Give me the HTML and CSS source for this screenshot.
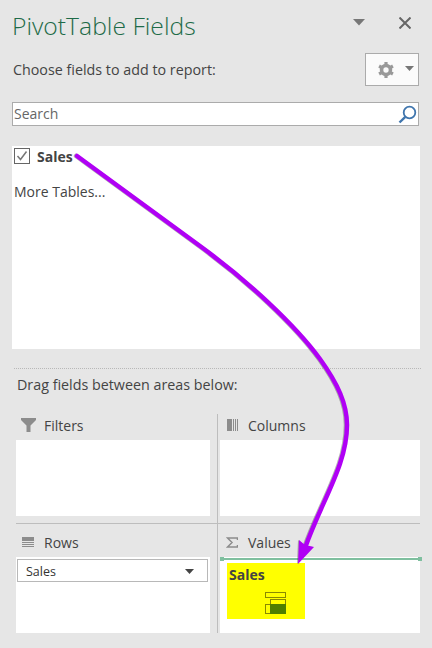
FILE: index.html
```html
<!DOCTYPE html>
<html>
  <head>
    <link rel="stylesheet" href="styles.css">
  </head>
  <body>
    <div class="pane">
      <div class="header">
        <div class="title">PivotTable Fields</div>
        <svg class="drop" width="13" height="7" viewBox="0 0 13 7"><path d="M0 0H12L6 6.500Z" fill="#777"/></svg>
        <svg class="close" width="12" height="12" viewBox="0 0 12 12"><path d="M0.500 0.500L11.500 11.500M11.500 0.500L0.500 11.500" stroke="#666" stroke-width="2" fill="none"/></svg>
      </div>

      <div class="choose">
        <span>Choose fields to add to report:</span>
        <div class="gear">
          <svg width="16" height="16" viewBox="0 0 18 18">
            <circle cx="9" cy="9" r="5" fill="none" stroke="#999" stroke-width="4"/>
            <path d="M9 0V18M1.200 4.500L16.800 13.500M16.800 4.500L1.200 13.500" stroke="#999" stroke-width="3.600" stroke-dasharray="3 12 3"/>
          </svg>
          <svg class="gear-drop" width="9" height="5" viewBox="0 0 9 5"><path d="M0 0H9L4.500 5Z" fill="#777"/></svg>
        </div>
      </div>

      <div class="search">
        <span class="search-text">Search</span>
        <svg width="19" height="19" viewBox="0 0 19 19">
          <circle cx="11.500" cy="7.500" r="5.800" fill="none" stroke="#3f75ad" stroke-width="1.800"/>
          <path d="M7.300 11.800L1.500 17.500" stroke="#3f75ad" stroke-width="2.400"/>
        </svg>
      </div>

      <div class="field-list">
        <div class="field">
          <svg width="16" height="16" viewBox="0 0 16 16">
            <rect x="0.500" y="0.500" width="15" height="15" fill="#fff" stroke="#666"/>
            <path d="M3.500 8L6.500 11.500L12.500 3.500" fill="none" stroke="#777" stroke-width="1.500"/>
          </svg>
          <b>Sales</b>
        </div>
        <div class="more">More Tables...</div>
      </div>

      <div class="dots"></div>
      <div class="drag">Drag fields between areas below:</div>

      <div class="areas">
        <div class="area area-top">
          <div class="area-label">
            <svg width="15" height="15" viewBox="0 0 15 15"><path d="M0 0H15V2L9.500 7.500V14H5.500V7.500L0 2Z" fill="#8c8c8c"/></svg>
            <span>Filters</span>
          </div>
          <div class="box"></div>
        </div>
        <div class="area area-top area-right">
          <div class="area-label">
            <svg class="columns-icon" width="11" height="12" viewBox="0 0 11 12"><path d="M0 0H5V12H0ZM6 0H7V12H6ZM8 0H9V12H8ZM10 0H11V12H10Z" fill="#8c8c8c"/></svg>
            <span>Columns</span>
          </div>
          <div class="box"></div>
        </div>
        <div class="area">
          <div class="area-label">
            <svg class="rows-icon" width="12" height="10" viewBox="0 0 12 10"><path d="M0 0H12V4H0ZM0 5H12V6H0ZM0 7H12V8H0ZM0 9H12V10H0Z" fill="#8c8c8c"/></svg>
            <span>Rows</span>
          </div>
          <div class="box">
            <div class="pill">
              <span>Sales</span>
              <svg width="9" height="5" viewBox="0 0 9 5"><path d="M0 0H9L4.500 5Z" fill="#444"/></svg>
            </div>
          </div>
        </div>
        <div class="area area-right">
          <div class="area-label">
            <svg width="12" height="11" viewBox="0 0 12 11"><path d="M11.500 3V1H1.500L6 5.500L1.500 10H11.500V8" fill="none" stroke="#8c8c8c" stroke-width="1.500"/></svg>
            <span>Values</span>
          </div>
          <div class="box box-values">
            <div class="drop-line"></div>
            <div class="drag-item">
              <b>Sales</b>
              <svg width="21" height="22" viewBox="0 0 21 22">
                <rect x="0.500" y="0.500" width="20" height="5" fill="none" stroke="#8a8a00"/>
                <rect x="5.500" y="7.500" width="15" height="14" fill="none" stroke="#8a8a00"/>
                <rect x="0.500" y="12.500" width="5" height="9" fill="none" stroke="#8a8a00"/>
                <rect x="5" y="12" width="16" height="10" fill="#4f7f00"/>
              </svg>
            </div>
          </div>
        </div>
      </div>
    </div>

    <!-- arrow drawn on top of the screenshot -->
    <svg class="arrow" width="432" height="648" viewBox="0 0 432 648">
      <path d="M77 156L200 246C248 281 295 325 320 359C338 384 347 404 347 425C347 465 322 500 305 548" fill="none" stroke="#b000f5" stroke-width="4.500" stroke-linecap="round"/>
      <path d="M298 564L299 540L305 545L314 547Z" fill="#b000f5"/>
    </svg>
  </body>
</html>
```

FILE: styles.css
```css
* { box-sizing: border-box; }
body {
  margin: 0;
  width: 432px;
  height: 648px;
  overflow: hidden;
  background-color: #e6e6e6;
  font: 14px "Open Sans", "Noto Sans", sans-serif;
  color: #444;
}
svg { display: block; flex: none; }
.pane {
  display: flex;
  flex-direction: column;
  height: 648px;
  padding: 0 13px 0 12px;
}
.header {
  display: flex;
  align-items: center;
  height: 53px;
  padding-bottom: 2px;
}
.title {
  flex: 1;
  font-size: 24.700px;
  font-weight: 300;
  color: #1e6b48;
  white-space: nowrap;
}
.drop { margin-right: 33px; margin-top: -6px; }
.close { margin-right: 8px; margin-top: -6px; }
.choose {
  display: flex;
  align-items: center;
  justify-content: space-between;
  height: 33px;
  padding-left: 1px;
  font-size: 14.300px;
}
.gear {
  display: flex;
  align-items: center;
  width: 54px;
  height: 33px;
  padding-left: 12px;
  background-color: #fbfbfb;
  border: 1px solid #ababab;
}
.gear-drop { margin-left: 11px; margin-top: -3px; }
.search {
  display: flex;
  align-items: center;
  justify-content: space-between;
  height: 24px;
  margin-top: 16px;
  padding: 0 1px 0 1px;
  background-color: #fff;
  border: 1px solid #ababab;
  color: #666;
}
.search-text { margin-top: -2px; }
.field-list {
  height: 203px;
  margin-top: 20px;
  padding: 0 2px;
  background-color: #fff;
  margin-right: -1px;
}
.field {
  display: flex;
  align-items: center;
  gap: 7px;
  height: 20px;
}
.more { margin-top: 16px; }
.dots {
  margin: 19px -2px 0 2px;
  border-top: 1px dotted #b8b8b8;
}
.drag {
  margin: 6px 0 0 5px;
  height: 25px;
  line-height: 19px;
  font-size: 14.300px;
}
.areas {
  display: grid;
  grid-template-columns: 201px 203px;
  margin: 14px 0 0 4px;
}
.area {
  display: flex;
  flex-direction: column;
  padding-right: 7px;
}
.area-top {
  height: 110px;
  border-bottom: 1px solid #bdbdbd;
}
.area-right {
  padding: 0 0 0 2px;
  border-left: 1px solid #bdbdbd;
}
.area:not(.area-top) { padding-top: 7px; }
.area-label {
  display: grid;
  grid-template-columns: 23px auto;
  align-items: center;
  height: 26px;
  padding: 0 0 4px 5px;
  flex: none;
}
.area-right .area-label {
  grid-template-columns: 22px auto;
  padding-left: 6px;
}
.rows-icon { margin-left: 1px; }
.columns-icon { margin-left: 1px; }
.box {
  position: relative;
  flex: none;
  height: 76px;
  background-color: #fff;
}
.pill {
  display: flex;
  align-items: center;
  justify-content: space-between;
  height: 23px;
  margin: 2px 2px 0 1px;
  padding: 1px 13px 0 8px;
  font-size: 12.500px;
  border: 1px solid #b8b8b8;
  color: #333;
}
.drop-line {
  position: absolute;
  left: 0;
  right: -2px;
  top: 1px;
  height: 2px;
  background-color: #7fbf9f;
}
.drop-line::before,
.drop-line::after {
  content: "";
  position: absolute;
  top: -1px;
  width: 4px;
  height: 4px;
  background-color: #7fbf9f;
}
.drop-line::before { left: 0; }
.drop-line::after { right: 0; }
.box-values { padding: 6px 0 0 7px; }
.drag-item {
  display: flex;
  flex-direction: column;
  width: 78px;
  height: 56px;
  padding: 2px;
  background-color: #ff0;
  color: #444;
  line-height: 20px;
}
.drag-item svg { margin: 7px 0 0 36px; }
.arrow {
  position: absolute;
  left: 0;
  top: 0;
  filter: drop-shadow(-0.5px 0.5px 0 rgba(70, 70, 70, 0.4));
}
```
